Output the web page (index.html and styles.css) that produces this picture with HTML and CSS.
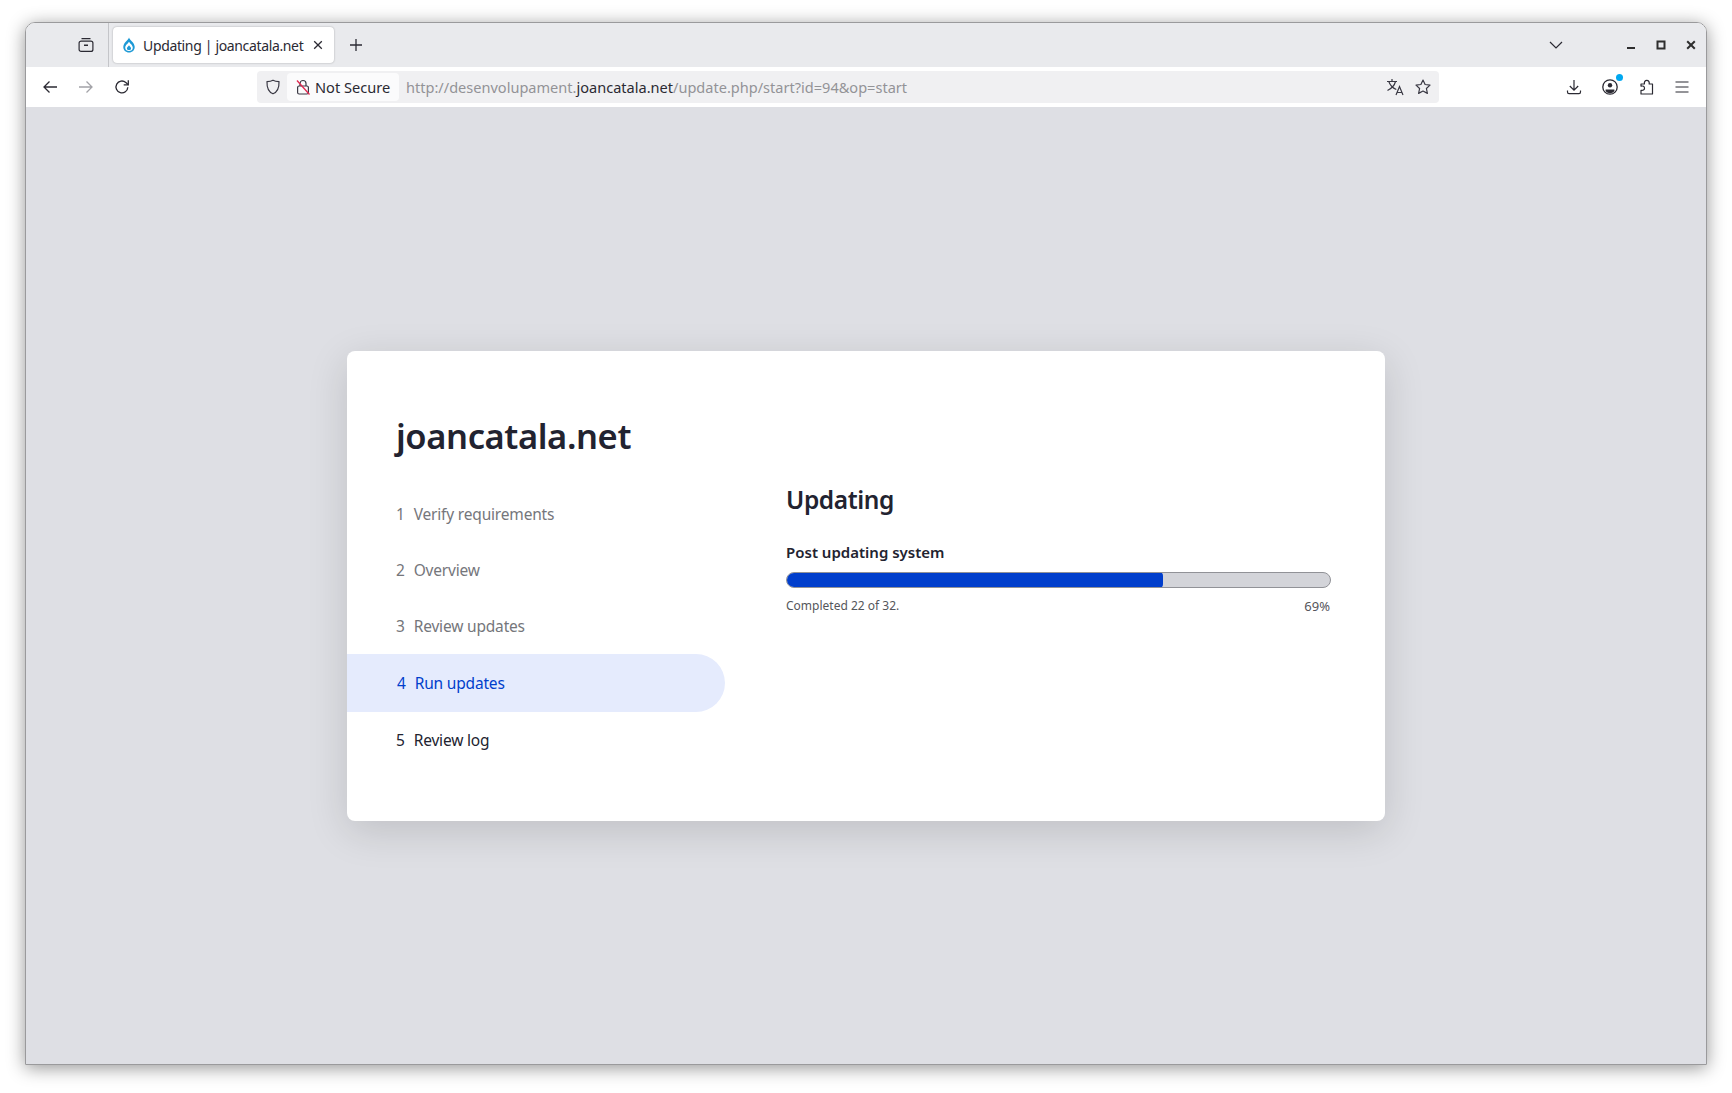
FILE: index.html
```html
<!DOCTYPE html>
<html lang="en">
<head>
    <meta charset="UTF-8">
    <title>Updating | joancatala.net</title>
    <link rel="stylesheet" href="styles.css">
</head>
<body>
    <div class="window">
        <div class="tab-strip">
            <button class="icon-btn tab-groups">
                <svg viewBox="0 0 16 16" width="16" height="16" fill="none" stroke="#2b2a33" stroke-width="1.2"><path d="M3.500 1.600h9"/><rect x="1.100" y="4.100" width="13.800" height="10.300" rx="2"/><path d="M6 8.200h4" stroke-width="1.500"/></svg>
            </button>
            <div class="tab-sep"></div>
            <div class="tab">
                <svg class="favicon" viewBox="0 0 16 16" width="16" height="16"><path d="M8 .4C8.700 3 13.400 5.200 13.700 9.800 13.900 13.200 11.200 15.600 8 15.600S2.100 13.200 2.300 9.800C2.600 5.200 7.300 3 8 .4Z" fill="#1e9ad6"/><path d="M8 4.800c.7 1.600 3.800 3.300 3.800 6 0 2.100-1.800 3.300-3.800 3.300s-3.800-1.200-3.800-3.300c0-2.700 3.100-4.400 3.800-6Z" fill="#fff"/><path d="M8 8.200c.5 1 2.100 1.800 2.100 3.200 0 1.100-1 1.700-2.100 1.700s-2.100-.6-2.100-1.700c0-1.400 1.600-2.200 2.100-3.200Z" fill="#1e9ad6"/></svg>
                <span class="tab-title">Updating | joancatala.net</span>
                <svg class="tab-close" viewBox="0 0 10 10" width="10" height="10" fill="none" stroke="#2b2a33" stroke-width="1.300"><path d="M1.200 1.200l7.600 7.600M8.800 1.200l-7.600 7.600"/></svg>
            </div>
            <button class="icon-btn new-tab">
                <svg viewBox="0 0 16 16" width="16" height="16" fill="none" stroke="#2b2a33" stroke-width="1.300"><path d="M8 2v12M2 8h12"/></svg>
            </button>
            <div class="spacer"></div>
            <button class="icon-btn tab-list">
                <svg viewBox="0 0 16 16" width="16" height="16" fill="none" stroke="#2b2a33" stroke-width="1.200"><path d="M2 5l6 6 6-6"/></svg>
            </button>
            <div class="win-controls">
                <button class="win-btn"><svg viewBox="0 0 10 10" width="10" height="10"><rect x="1" y="7" width="8" height="2" fill="#2e2e2e"/></svg></button>
                <button class="win-btn"><svg viewBox="0 0 10 10" width="10" height="10" fill="none" stroke="#2e2e2e" stroke-width="2"><rect x="1.500" y="1.500" width="7" height="7"/></svg></button>
                <button class="win-btn"><svg viewBox="0 0 10 10" width="10" height="10" fill="none" stroke="#2e2e2e" stroke-width="2"><path d="M1.200 1.200l7.600 7.600M8.800 1.200l-7.600 7.600"/></svg></button>
            </div>
        </div>

        <div class="toolbar">
            <button class="icon-btn">
                <svg viewBox="0 0 16 16" width="16" height="16" fill="none" stroke="#2b2a33" stroke-width="1.300"><path d="M15 8H2M7.500 2.500L2 8l5.500 5.500"/></svg>
            </button>
            <button class="icon-btn">
                <svg viewBox="0 0 16 16" width="16" height="16" fill="none" stroke="#a3a3a8" stroke-width="1.300"><path d="M1 8h13M8.500 2.500L14 8l-5.500 5.500"/></svg>
            </button>
            <button class="icon-btn">
                <svg viewBox="0 0 16 16" width="16" height="16" fill="none" stroke="#2b2a33" stroke-width="1.300"><path d="M13.800 8.200A5.900 5.900 0 1 1 11.800 3.500L14 5.500"/><path d="M14.300 1.200v4.600H9.700"/></svg>
            </button>
            <div class="urlbar">
                <svg class="shield" viewBox="0 0 16 16" width="16" height="16" fill="none" stroke="#3a3944" stroke-width="1.200"><path d="M8 1.200c2 1 4 1.300 6 1.500 .2 5-1 10-6 12.100C3 12.700 1.800 7.700 2 2.700c2-.2 4-.5 6-1.500Z"/></svg>
                <div class="not-secure">
                    <svg viewBox="0 0 16 16" width="16" height="16" fill="none" stroke-width="1.200"><path d="M5 7V4.500a3 3 0 0 1 6 0V7" stroke="#3a3944"/><rect x="2.600" y="7" width="10.800" height="8" rx="1.500" stroke="#3a3944"/><path d="M2 1.500l12.500 14" stroke="#e22850" stroke-width="1.300"/></svg>
                    <span>Not Secure</span>
                </div>
                <div class="url"><span class="url-dim">http://desenvolupament.</span>joancatala.net<span class="url-dim">/update.php/start?id=94&amp;op=start</span></div>
                <svg class="url-icon" viewBox="0 0 18 18" width="18" height="18" fill="none" stroke="#3a3944" stroke-width="1.200"><path d="M1 3.500h10M6 1v2.500M9.500 3.500C8.500 7.500 5.500 10.500 1.500 12.500M2.800 3.500c1.200 3.500 4 6.500 7.500 8"/><path d="M10 17l3.500-8.500L17 17M11.200 14.500h4.600"/></svg>
                <svg class="url-icon star" viewBox="0 0 16 16" width="16" height="16" fill="none" stroke="#3a3944" stroke-width="1.200"><path d="M8 1l2.100 4.500 4.900.6-3.600 3.400 1 4.900L8 12l-4.400 2.400 1-4.900L1 6.100l4.900-.6Z" stroke-linejoin="round"/></svg>
            </div>
            <div class="toolbar-right">
                <button class="icon-btn">
                    <svg viewBox="0 0 16 16" width="16" height="16" fill="none" stroke="#2b2a33" stroke-width="1.200"><path d="M8 1v10M3.800 7L8 11.200 12.200 7M1.500 11.500v1.500c0 1 .6 1.600 1.500 1.600h10c.9 0 1.500-.6 1.500-1.600v-1.500"/></svg>
                </button>
                <button class="icon-btn account">
                    <svg viewBox="0 0 16 16" width="16" height="16" fill="none"><circle cx="8" cy="8" r="7.200" stroke="#2b2a33" stroke-width="1.300"/><circle cx="8" cy="6.200" r="2.200" fill="#2b2a33"/><path d="M3.600 10.500h8.800v1.800A6 6 0 0 1 8 14.300a6 6 0 0 1-4.400-2Z" fill="#2b2a33"/></svg>
                    <span class="account-dot"></span>
                </button>
                <button class="icon-btn">
                    <svg viewBox="0 0 16 16" width="16" height="16" fill="none" stroke="#2b2a33" stroke-width="1.200" stroke-linejoin="round"><path d="M3 5H6.400C6.100 3 7 1.300 8.800 1.300S11.500 3 11.200 5H14.500V15H3V11.300C5 11.800 6.500 10.900 6.500 9.200S5 6.600 3 7.200Z"/></svg>
                </button>
                <button class="icon-btn">
                    <svg viewBox="0 0 16 16" width="16" height="16" fill="none" stroke="#2b2a33" stroke-width="1.200"><path d="M1.500 3h13M1.500 8h13M1.500 13h13"/></svg>
                </button>
            </div>
        </div>

        <div class="page">
            <div class="card">
                <div class="sidebar">
                    <h1 class="site-name">joancatala.net</h1>
                    <ol class="steps">
                        <li class="step done"><span class="num">1</span>Verify requirements</li>
                        <li class="step done"><span class="num">2</span>Overview</li>
                        <li class="step done"><span class="num">3</span>Review updates</li>
                        <li class="step active"><span class="num">4</span>Run updates</li>
                        <li class="step"><span class="num">5</span>Review log</li>
                    </ol>
                </div>
                <div class="main">
                    <h2 class="title">Updating</h2>
                    <div class="progress-label">Post updating system</div>
                    <div class="progress-track"><div class="progress-fill" style="width: 69.5%"></div></div>
                    <div class="progress-info">
                        <span>Completed 22 of 32.</span>
                        <span class="percent">69%</span>
                    </div>
                </div>
            </div>
        </div>
    </div>
</body>
</html>
```

FILE: styles.css
```css
* {
    box-sizing: border-box;
}
body {
    margin: 0;
    height: 1093px;
    padding: 22px 25px 28px 25px;
    background-color: #fff;
    font-family: "Noto Sans", sans-serif;
    color: #222330;
    overflow: hidden;
}
button {
    border: none;
    background: none;
    padding: 0;
}
.window {
    height: 100%;
    display: flex;
    flex-direction: column;
    border: 1px solid #9a9a9c;
    border-radius: 10px 10px 0 0;
    box-shadow: 0 3px 18px rgba(0, 0, 0, 0.42);
    overflow: hidden;
}
.tab-strip {
    display: flex;
    align-items: center;
    height: 44px;
    padding-left: 44px;
    background-color: #e9eaed;
}
.icon-btn {
    position: relative;
    display: flex;
    justify-content: center;
    align-items: center;
    width: 32px;
    height: 32px;
    flex: none;
}
.tab-sep {
    align-self: stretch;
    width: 1px;
    margin-left: 6px;
    background-color: #c4c5c9;
}
.tab {
    display: flex;
    align-items: center;
    width: 221px;
    height: 36px;
    margin-left: 4px;
    padding-left: 8px;
    background-color: #fff;
    border-radius: 4px;
    box-shadow: 0 0 2px rgba(0, 0, 0, 0.3);
}
.tab-title {
    margin-left: 6px;
    font-size: 14px;
    letter-spacing: -0.35px;
    color: #2b2a33;
    white-space: nowrap;
}
.tab-close {
    margin-left: 10px;
}
.new-tab {
    margin-left: 6px;
}
.spacer {
    flex: 1;
}
.tab-list {
    margin-right: 44px;
}
.win-controls {
    display: flex;
}
.win-btn {
    display: flex;
    justify-content: center;
    align-items: center;
    width: 30px;
    height: 32px;
}
.toolbar {
    display: flex;
    align-items: center;
    gap: 4px;
    height: 40px;
    padding: 0 8px 0 8px;
    background-color: #fff;
}
.urlbar {
    flex: 1;
    display: flex;
    align-items: center;
    height: 32px;
    margin: 0 115px;
    padding: 0 8px 0 8px;
    background-color: #f0f0f2;
    border-radius: 4px;
}
.shield {
    flex: none;
}
.not-secure {
    display: flex;
    align-items: center;
    gap: 4px;
    width: 112px;
    height: 28px;
    margin-left: 6px;
    padding-left: 8px;
    background-color: #fbfbfc;
    border-radius: 4px;
    font-size: 14.6px;
    color: #2b2a33;
    white-space: nowrap;
}
.url {
    flex: 1;
    margin-left: 7px;
    font-size: 14.55px;
    color: #2b2a33;
    white-space: nowrap;
}
.url-dim {
    color: #939397;
}
.url-icon {
    flex: none;
}
.star {
    margin-left: 11px;
}
.toolbar-right {
    display: flex;
    gap: 4px;
}
.account-dot {
    position: absolute;
    top: 3px;
    right: 3px;
    width: 7px;
    height: 7px;
    border-radius: 50%;
    background-color: #00a8f0;
}
.page {
    flex: 1;
    padding: 244px 0 0 321px;
    background-color: #dedfe4;
}
.card {
    display: flex;
    width: 1038px;
    height: 470px;
    background-color: #fff;
    border-radius: 8px;
    box-shadow: 0 10px 40px rgba(0, 0, 0, 0.14);
}
.sidebar {
    width: 378px;
    flex: none;
    padding-top: 62px;
}
.site-name {
    margin: 0 0 27px;
    padding-left: 49px;
    font-size: 34.5px;
    letter-spacing: -0.4px;
    line-height: 46px;
    font-weight: 600;
}
.steps {
    margin: 0;
    padding: 0;
    list-style: none;
}
.step {
    display: flex;
    align-items: center;
    height: 56px;
    padding-left: 49px;
    font-size: 15.5px;
    letter-spacing: -0.18px;
}
.step.done {
    color: #75767b;
}
.step.active {
    height: 58px;
    padding-left: 50px;
    color: #003ecc;
    background-color: #e5ebfd;
    border-radius: 0 29px 29px 0;
}
.num {
    margin-right: 9px;
}
.main {
    flex: 1;
    padding: 133px 54px 0 61px;
}
.title {
    margin: 0;
    font-size: 24.5px;
    letter-spacing: -0.4px;
    line-height: 32px;
    font-weight: 600;
}
.progress-label {
    margin-top: 25px;
    font-size: 15px;
    line-height: 22px;
    font-weight: 600;
}
.progress-track {
    height: 16px;
    margin-top: 9px;
    background-color: #d3d4d9;
    border: 1px solid #919297;
    border-radius: 8px;
    overflow: hidden;
}
.progress-fill {
    height: 16px;
    margin: -1px 0 0 -1px;
    background-color: #003ecc;
    border-radius: 8px 4px 4px 8px;
}
.progress-info {
    display: flex;
    justify-content: space-between;
    margin-top: 9px;
    padding-right: 1px;
    font-size: 12px;
    line-height: 18px;
    color: #55565b;
}
.percent {
    font-size: 13px;
}
```
